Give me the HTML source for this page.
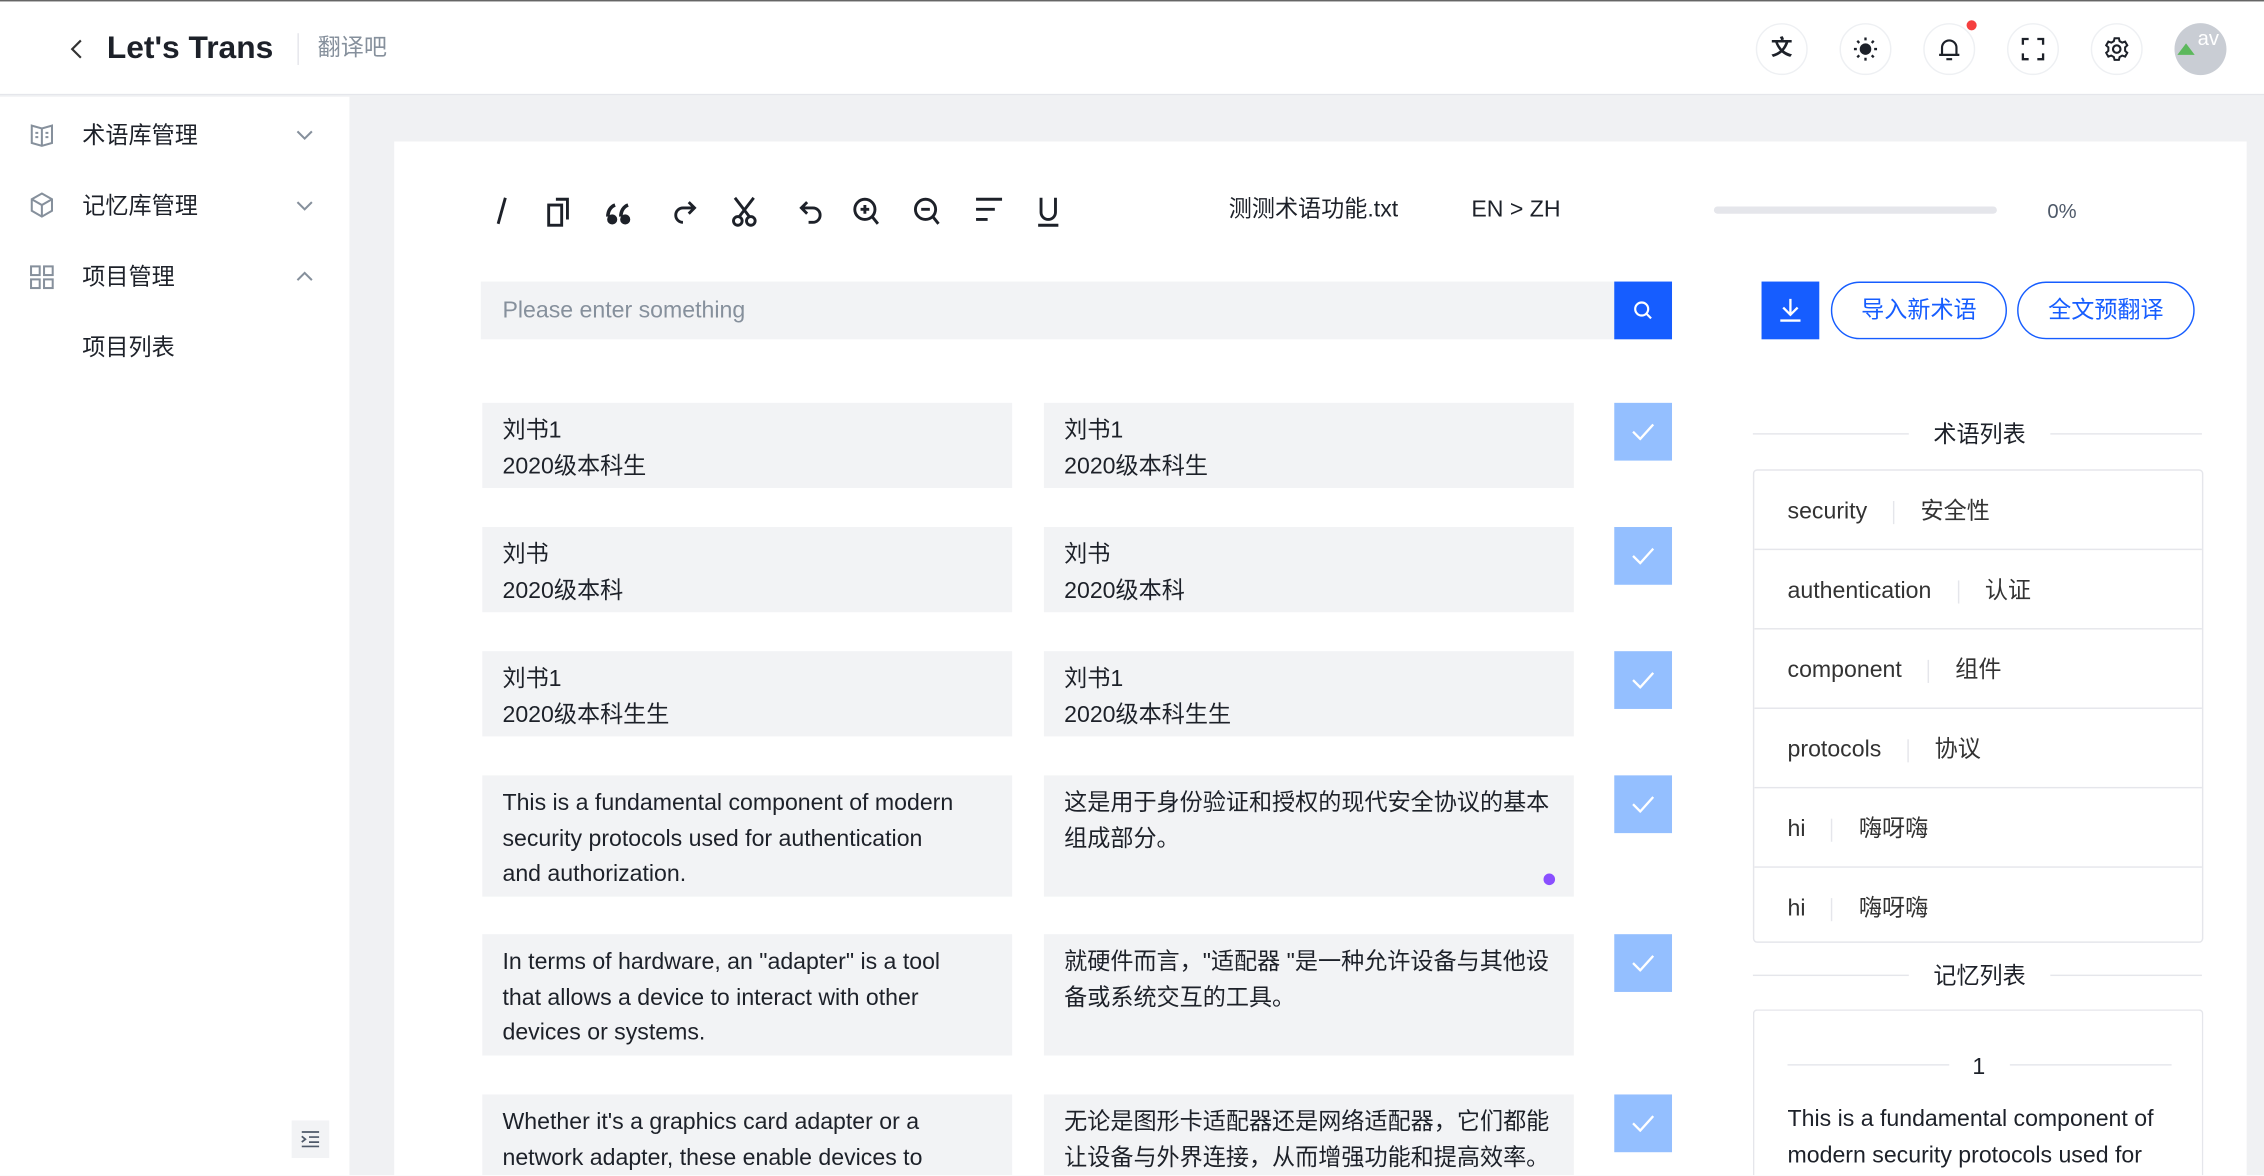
<!DOCTYPE html>
<html><head><meta charset="utf-8"><style>
*{box-sizing:border-box;margin:0;padding:0}
html,body{width:2264px;height:1176px;overflow:hidden;background:#fff}
#w{position:absolute;left:0;top:0;width:1568px;height:814px;transform:scale(1.44388);transform-origin:0 0;font-family:"Liberation Sans","Noto Sans CJK SC",sans-serif;color:#1d2129;font-size:16px;line-height:24px;background:#f0f1f3;overflow:hidden}
.a{position:absolute}
.hdr{left:0;top:0;width:1568px;height:66px;background:#fff;border-top:1px solid #666;border-bottom:1px solid #e5e6eb}
.side{left:0;top:67px;width:242px;height:747px;background:#fff}
.card{left:273px;top:98px;width:1283px;height:716px;background:#fff;overflow:hidden}
.circ{width:36px;height:36px;border-radius:50%;border:1px solid #eef0f3;display:flex;align-items:center;justify-content:center}
.box{background:#f2f3f5;padding:8px 14px;line-height:24.5px;font-size:16px;color:#1d2129;white-space:nowrap;overflow:hidden}
.chk{width:40px;height:40px;background:#94bfff;display:flex;align-items:center;justify-content:center}
.ti{position:absolute;left:0;width:311px;height:55px;border-bottom:1px solid #e5e6eb;padding-left:23px;padding-top:3px;display:flex;align-items:center;font-size:16px;color:#333}
.ti i{display:inline-block;width:1px;height:16px;background:#e5e6eb;margin:0 18px}
.ti span{line-height:20px}
svg{display:block}
</style></head><body><div id="w">
<div class="a hdr">
 <svg class="a" style="left:47px;top:25px" width="12" height="16" viewBox="0 0 12 16"><path d="M9 2 L3 8 L9 14" fill="none" stroke="#333" stroke-width="1.5"/></svg>
 <div class="a" style="left:74px;top:20px;font-size:22px;font-weight:bold;color:#1d2129">Let's Trans</div>
 <div class="a" style="left:206px;top:22px;width:1px;height:22px;background:#e5e6eb"></div>
 <div class="a" style="left:220px;top:21px;font-size:16px;color:#86909c">翻译吧</div>
 <div class="a circ" style="left:1216px;top:15px"><span style="font-size:15px;font-weight:bold">文</span></div>
 <div class="a circ" style="left:1274px;top:15px"><svg width="18" height="18" viewBox="0 0 18 18"><circle cx="9" cy="9" r="4" fill="#1d2129"/><g stroke="#1d2129" stroke-width="1.6"><path d="M9 1v2M9 15v2M1 9h2M15 9h2M3.3 3.3l1.4 1.4M13.3 13.3l1.4 1.4M3.3 14.7l1.4-1.4M13.3 4.7l1.4-1.4"/></g></svg></div>
 <div class="a circ" style="left:1332px;top:15px"><svg width="16" height="18" viewBox="0 0 16 18"><path d="M3 13V8a5 5 0 0 1 10 0v5H3zM1 13h14M6 16h4" fill="none" stroke="#1d2129" stroke-width="1.5"/></svg></div>
 <div class="a" style="left:1362px;top:13px;width:7px;height:7px;border-radius:50%;background:#f53f3f"></div>
 <div class="a circ" style="left:1390px;top:15px"><svg width="16" height="16" viewBox="0 0 16 16"><path d="M1 5V1h4M11 1h4v4M15 11v4h-4M5 15H1v-4" fill="none" stroke="#1d2129" stroke-width="1.6"/></svg></div>
 <div class="a circ" style="left:1448px;top:15px"><svg width="18" height="18" viewBox="0 0 18 18"><circle cx="9" cy="9" r="2.6" fill="none" stroke="#1d2129" stroke-width="1.5"/><path d="M7.5 1.5h3l.5 2 1.8 1 2-.7 1.5 2.6-1.5 1.4v2.4l1.5 1.4-1.5 2.6-2-.7-1.8 1-.5 2h-3l-.5-2-1.8-1-2 .7-1.5-2.6 1.5-1.4V7.8L1.7 6.4l1.5-2.6 2 .7 1.8-1z" fill="none" stroke="#1d2129" stroke-width="1.4"/></svg></div>
 <div class="a" style="left:1506px;top:15px;width:36px;height:36px;border-radius:50%;background:#c9cdd4;overflow:hidden"><div class="a" style="left:2px;top:14px;width:0;height:0;border-left:6px solid transparent;border-right:6px solid transparent;border-bottom:8px solid #5cb85c"></div><span class="a" style="left:16px;top:2px;color:#fff;font-size:14px;line-height:16px">av</span></div>
</div>
<div class="a side">
 <svg class="a" style="left:20px;top:17px" width="18" height="18" viewBox="0 0 18 18"><path d="M2 3l7 2 7-2v12l-7 2-7-2zM9 5v12M4.5 8h2M4.5 11h2M11.5 8h2M11.5 11h2" fill="none" stroke="#86909c" stroke-width="1.4"/></svg>
 <div class="a" style="left:57px;top:16px">术语库管理</div>
 <svg class="a" style="left:205px;top:23px" width="12" height="8" viewBox="0 0 12 8"><path d="M1 1l5 5 5-5" fill="none" stroke="#86909c" stroke-width="1.4"/></svg>
 <svg class="a" style="left:20px;top:66px" width="18" height="18" viewBox="0 0 18 18"><path d="M9 1l7 4v8l-7 4-7-4V5zM2 5l7 4 7-4M9 9v8" fill="none" stroke="#86909c" stroke-width="1.4"/></svg>
 <div class="a" style="left:57px;top:65px">记忆库管理</div>
 <svg class="a" style="left:205px;top:72px" width="12" height="8" viewBox="0 0 12 8"><path d="M1 1l5 5 5-5" fill="none" stroke="#86909c" stroke-width="1.4"/></svg>
 <svg class="a" style="left:20px;top:116px" width="18" height="18" viewBox="0 0 18 18"><g fill="none" stroke="#86909c" stroke-width="1.4"><rect x="1.5" y="1.5" width="6" height="6"/><rect x="10.5" y="1.5" width="6" height="6"/><rect x="1.5" y="10.5" width="6" height="6"/><rect x="10.5" y="10.5" width="6" height="6"/></g></svg>
 <div class="a" style="left:57px;top:114px">项目管理</div>
 <svg class="a" style="left:205px;top:120px" width="12" height="8" viewBox="0 0 12 8"><path d="M1 7l5-5 5 5" fill="none" stroke="#86909c" stroke-width="1.4"/></svg>
 <div class="a" style="left:57px;top:163px">项目列表</div>
 <div class="a" style="left:202px;top:709px;width:26px;height:26px;background:#f2f3f5;display:flex;align-items:center;justify-content:center"><svg width="14" height="12" viewBox="0 0 14 12"><path d="M1 1h12M6 4.5h7M6 8h7M1 11h12M1 4l2.5 2L1 8" fill="none" stroke="#4e5969" stroke-width="1.2"/></svg></div>
</div>
<div class="a card">
 <svg class="a" style="left:62px;top:36px" width="420" height="24" viewBox="0 0 420 24" fill="none" stroke="#1d2129" stroke-width="2">
  <path d="M15 3L10 21"/>
  <rect x="45" y="8" width="9" height="14"/><path d="M50 4h8v14"/>
  <path d="M91 8c-3 1-5 4-5 8M100 8c-3 1-5 4-5 8" stroke-width="2.5"/><circle cx="89" cy="18" r="2.5" fill="#1d2129"/><circle cx="98" cy="18" r="2.5" fill="#1d2129"/>
  <path d="M146 10h-8a5 5 0 0 0 0 10M142 6l4 4-4 4"/>
  <circle cx="176" cy="19" r="3"/><circle cx="185" cy="19" r="3"/><path d="M177 16L187 3M184 16L174 3"/>
  <path d="M220 10h8a5 5 0 0 1 0 10h-3M224 6l-4 4 4 4"/>
  <circle cx="264" cy="11" r="7"/><path d="M269 16l4 5M264 8v6M261 11h6"/>
  <circle cx="306" cy="11" r="7"/><path d="M311 16l4 5M303 11h6"/>
  <path d="M341 4h18M341 11h13M341 18h8"/>
  <path d="M386 3v10a5 5 0 0 0 10 0V3M384 22h14"/>
 </svg>
 <div class="a" style="left:578px;top:36px">测测术语功能.txt</div>
 <div class="a" style="left:746px;top:36px">EN &gt; ZH</div>
 <div class="a" style="left:914px;top:45px;width:196px;height:5px;border-radius:3px;background:#e5e6eb"></div>
 <div class="a" style="left:1145px;top:36px;font-size:14px;color:#4e5969">0%</div>
 <div class="a" style="left:60px;top:97px;width:786px;height:40px;background:#f2f3f5;padding:9px 15px;color:#86909c">Please enter something</div>
 <div class="a" style="left:845px;top:97px;width:40px;height:40px;background:#165dff;display:flex;align-items:center;justify-content:center"><svg width="14" height="14" viewBox="0 0 14 14"><circle cx="6" cy="6" r="4.5" fill="none" stroke="#fff" stroke-width="1.5"/><path d="M9.5 9.5L12.5 12.5" stroke="#fff" stroke-width="1.5"/></svg></div>
 <div class="a" style="left:947px;top:97px;width:40px;height:40px;background:#165dff;display:flex;align-items:center;justify-content:center"><svg width="16" height="18" viewBox="0 0 16 18"><path d="M8 1v11M3 7l5 5 5-5M1 16h14" fill="none" stroke="#fff" stroke-width="1.6"/></svg></div>
 <div class="a" style="left:995px;top:97px;width:122px;height:40px;border:1px solid #165dff;border-radius:20px;color:#165dff;text-align:center;line-height:40px">导入新术语</div>
 <div class="a" style="left:1124px;top:97px;width:123px;height:40px;border:1px solid #165dff;border-radius:20px;color:#165dff;text-align:center;line-height:40px">全文预翻译</div>

 <div class="a box" style="left:61px;top:181px;width:367px;height:59px">刘书1<br>2020级本科生</div>
 <div class="a box" style="left:450px;top:181px;width:367px;height:59px">刘书1<br>2020级本科生</div>
 <div class="a box" style="left:61px;top:267px;width:367px;height:59px">刘书<br>2020级本科</div>
 <div class="a box" style="left:450px;top:267px;width:367px;height:59px">刘书<br>2020级本科</div>
 <div class="a box" style="left:61px;top:353px;width:367px;height:59px">刘书1<br>2020级本科生生</div>
 <div class="a box" style="left:450px;top:353px;width:367px;height:59px">刘书1<br>2020级本科生生</div>
 <div class="a box" style="left:61px;top:439px;width:367px;height:84px">This is a fundamental component of modern<br>security protocols used for authentication<br>and authorization.</div>
 <div class="a box" style="left:450px;top:439px;width:367px;height:84px">这是用于身份验证和授权的现代安全协议的基本<br>组成部分。</div>
 <div class="a" style="left:796px;top:507px;width:8px;height:8px;border-radius:50%;background:#8a4fff"></div>
 <div class="a box" style="left:61px;top:549px;width:367px;height:84px">In terms of hardware, an "adapter" is a tool<br>that allows a device to interact with other<br>devices or systems.</div>
 <div class="a box" style="left:450px;top:549px;width:367px;height:84px">就硬件而言，"适配器 "是一种允许设备与其他设<br>备或系统交互的工具。</div>
 <div class="a box" style="left:61px;top:660px;width:367px;height:56px">Whether it's a graphics card adapter or a<br>network adapter, these enable devices to</div>
 <div class="a box" style="left:450px;top:660px;width:367px;height:56px">无论是图形卡适配器还是网络适配器，它们都能<br>让设备与外界连接，从而增强功能和提高效率。</div>
 <div class="a chk" style="left:845px;top:181px"><svg width="16" height="12" viewBox="0 0 16 12"><path d="M1 6l5 5 9-10" fill="none" stroke="#fff" stroke-width="1.6"/></svg></div>
 <div class="a chk" style="left:845px;top:267px"><svg width="16" height="12" viewBox="0 0 16 12"><path d="M1 6l5 5 9-10" fill="none" stroke="#fff" stroke-width="1.6"/></svg></div>
 <div class="a chk" style="left:845px;top:353px"><svg width="16" height="12" viewBox="0 0 16 12"><path d="M1 6l5 5 9-10" fill="none" stroke="#fff" stroke-width="1.6"/></svg></div>
 <div class="a chk" style="left:845px;top:439px"><svg width="16" height="12" viewBox="0 0 16 12"><path d="M1 6l5 5 9-10" fill="none" stroke="#fff" stroke-width="1.6"/></svg></div>
 <div class="a chk" style="left:845px;top:549px"><svg width="16" height="12" viewBox="0 0 16 12"><path d="M1 6l5 5 9-10" fill="none" stroke="#fff" stroke-width="1.6"/></svg></div>
 <div class="a chk" style="left:845px;top:660px"><svg width="16" height="12" viewBox="0 0 16 12"><path d="M1 6l5 5 9-10" fill="none" stroke="#fff" stroke-width="1.6"/></svg></div>

 <div class="a" style="left:941px;top:202px;width:108px;height:1px;background:#e5e6eb"></div>
 <div class="a" style="left:1066px;top:192px">术语列表</div>
 <div class="a" style="left:1147px;top:202px;width:105px;height:1px;background:#e5e6eb"></div>
 <div class="a" style="left:941px;top:227px;width:312px;height:328px;border:1px solid #e5e6eb;border-radius:3px;overflow:hidden">
  <div class="ti" style="top:0"><span>security</span><i></i><span>安全性</span></div>
  <div class="ti" style="top:55px"><span>authentication</span><i></i><span>认证</span></div>
  <div class="ti" style="top:110px"><span>component</span><i></i><span>组件</span></div>
  <div class="ti" style="top:165px"><span>protocols</span><i></i><span>协议</span></div>
  <div class="ti" style="top:220px"><span>hi</span><i></i><span>嗨呀嗨</span></div>
  <div class="ti" style="top:275px;border:0"><span>hi</span><i></i><span>嗨呀嗨</span></div>
 </div>
 <div class="a" style="left:941px;top:577px;width:108px;height:1px;background:#e5e6eb"></div>
 <div class="a" style="left:1066px;top:567px">记忆列表</div>
 <div class="a" style="left:1147px;top:577px;width:105px;height:1px;background:#e5e6eb"></div>
 <div class="a" style="left:941px;top:601px;width:312px;height:115px;border:1px solid #e5e6eb;border-bottom:0;border-radius:3px 3px 0 0;overflow:hidden">
  <div class="a" style="left:23px;top:37px;width:112px;height:1px;background:#e5e6eb"></div>
  <div class="a" style="left:151px;top:28px">1</div>
  <div class="a" style="left:177px;top:37px;width:112px;height:1px;background:#e5e6eb"></div>
  <div class="a" style="left:23px;top:63px;width:275px;line-height:25px;color:#1d2129">This is a fundamental component of<br>modern security protocols used for</div>
 </div>
</div>
</div></body></html>
